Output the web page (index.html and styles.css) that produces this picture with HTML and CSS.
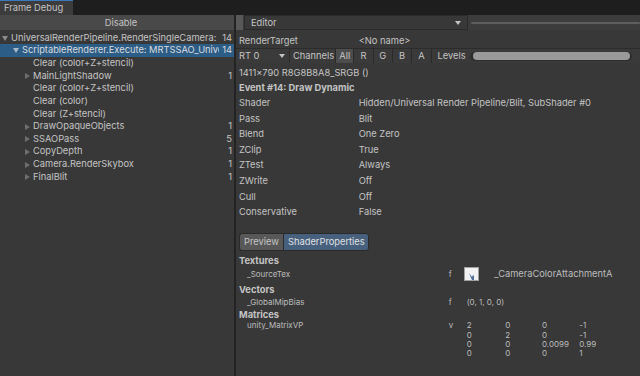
FILE: index.html
```html
<!DOCTYPE html>
<html>
<head>
<meta charset="utf-8">
<link rel="stylesheet" href="styles.css">
</head>
<body>
<div class="tabbar"><div class="tab">Frame Debug</div></div>
<div class="main">
  <div class="left">
    <div class="btn-disable">Disable</div>
    <div class="tree">
      <div class="row d0"><span class="arr open"></span><span class="name">UniversalRenderPipeline.RenderSingleCamera:</span><span class="cnt">14</span></div>
      <div class="row d1 sel"><span class="arr open"></span><span class="name">ScriptableRenderer.Execute: MRTSSAO_Universal</span><span class="cnt">14</span></div>
      <div class="row d2"><span class="arr"></span><span class="name">Clear (color+Z+stencil)</span><span class="cnt"></span></div>
      <div class="row d2"><span class="arr closed"></span><span class="name">MainLightShadow</span><span class="cnt">1</span></div>
      <div class="row d2"><span class="arr"></span><span class="name">Clear (color+Z+stencil)</span><span class="cnt"></span></div>
      <div class="row d2"><span class="arr"></span><span class="name">Clear (color)</span><span class="cnt"></span></div>
      <div class="row d2"><span class="arr"></span><span class="name">Clear (Z+stencil)</span><span class="cnt"></span></div>
      <div class="row d2"><span class="arr closed"></span><span class="name">DrawOpaqueObjects</span><span class="cnt">1</span></div>
      <div class="row d2"><span class="arr closed"></span><span class="name">SSAOPass</span><span class="cnt">5</span></div>
      <div class="row d2"><span class="arr closed"></span><span class="name">CopyDepth</span><span class="cnt">1</span></div>
      <div class="row d2"><span class="arr closed"></span><span class="name">Camera.RenderSkybox</span><span class="cnt">1</span></div>
      <div class="row d2"><span class="arr closed"></span><span class="name">FinalBlit</span><span class="cnt">1</span></div>
    </div>
  </div>
  <div class="rpanel">
    <div class="rtool">
      <div class="sq"></div>
      <div class="popup">Editor<span class="drop"></span></div>
      <div class="evslider"><div class="track"></div></div>
    </div>
    <div class="pane">
      <div class="prop first"><span class="lbl">RenderTarget</span><span class="val">&lt;No name&gt;</span></div>
      <div class="rtrow">
        <div class="rtpop">RT 0<span class="drop"></span></div>
        <div class="chlbl">Channels</div>
        <div class="chbtn on">All</div>
        <div class="chbtn">R</div>
        <div class="chbtn">G</div>
        <div class="chbtn">B</div>
        <div class="chbtn">A</div>
        <div class="levels">Levels</div>
        <div class="lvslider"><div class="lvfill"></div></div>
      </div>
      <div class="line res">1411x790 R8G8B8A8_SRGB ()</div>
      <div class="line title">Event #14: Draw Dynamic</div>
      <div class="props">
        <div class="prop"><span class="lbl">Shader</span><span class="val">Hidden/Universal Render Pipeline/Blit, SubShader #0</span></div>
        <div class="prop"><span class="lbl">Pass</span><span class="val">Blit</span></div>
        <div class="prop"><span class="lbl">Blend</span><span class="val">One Zero</span></div>
        <div class="prop"><span class="lbl">ZClip</span><span class="val">True</span></div>
        <div class="prop"><span class="lbl">ZTest</span><span class="val">Always</span></div>
        <div class="prop"><span class="lbl">ZWrite</span><span class="val">Off</span></div>
        <div class="prop"><span class="lbl">Cull</span><span class="val">Off</span></div>
        <div class="prop"><span class="lbl">Conservative</span><span class="val">False</span></div>
      </div>
      <div class="tabs"><div class="ptab">Preview</div><div class="ptab act">ShaderProperties</div></div>
      <div class="sect">Textures</div>
      <div class="sp tex">
        <span class="spn">_SourceTex</span><span class="spt">f</span>
        <span class="thumb"><svg width="15" height="14" viewBox="0 0 15 14"><rect x="0.5" y="0.5" width="14" height="13" fill="#f2f2f2" stroke="#a0a0a0"/><path d="M5 6 L7 11 L8 13 L10 13 L10 9 L9 8 L8 10 Z" fill="#4f6f9c"/></svg></span>
        <span class="spv">_CameraColorAttachmentA</span>
      </div>
      <div class="sect">Vectors</div>
      <div class="sp"><span class="spn">_GlobalMipBias</span><span class="spt">f</span><span class="spv vec">(0, 1, 0, 0)</span></div>
      <div class="sect">Matrices</div>
      <div class="sp mat">
        <span class="spn">unity_MatrixVP</span><span class="spt">v</span>
        <div class="mgrid">
          <span>2</span><span>0</span><span>0</span><span>-1</span>
          <span>0</span><span>2</span><span>0</span><span>-1</span>
          <span>0</span><span>0</span><span>0.0099</span><span>0.99</span>
          <span>0</span><span>0</span><span>0</span><span>1</span>
        </div>
      </div>
    </div>
  </div>
</div>
</body>
</html>
```

FILE: styles.css
```css
* { box-sizing: border-box; margin: 0; padding: 0; }
html, body { width: 640px; height: 376px; overflow: hidden; }
body {
  background: #383838;
  color: #c4c4c4;
  font-family: Inter, "Noto Sans", sans-serif;
  font-size: 9.3px;
}
.tabbar { height: 15px; background: #1e1e1e; display: flex; }
.tab {
  width: 73px; height: 15px; background: #3c3c3c;
  border-top: 1px solid #3a79bb;
  padding-left: 4px; line-height: 13px; color: #c4c4c4;
}
.main { display: flex; height: 361px; }
.left { width: 236px; border-right: 2px solid #232323; display: flex; flex-direction: column; }
.btn-disable {
  height: 15px; background: #494949; text-align: center; line-height: 15px; color: #c4c4c4;
  padding-left: 8px;
}
.tree { padding-top: 1.7px; }
.row { display: flex; height: 12.65px; line-height: 12.65px; padding-right: 2px; white-space: nowrap; }
.row.sel { background: #2c5d87; color: #dcdcdc; }
.row.d1 { padding-left: 11px; }
.row.d2 { padding-left: 22px; }
.arr { width: 11px; flex: none; position: relative; }
.arr.open::before {
  content: ""; position: absolute; left: 2px; top: 4px;
  border-left: 3px solid transparent; border-right: 3px solid transparent; border-top: 5px solid #8c8c8c;
}
.row.sel .arr.open::before { border-top-color: #a8b8c8; }
.arr.closed::before {
  content: ""; position: absolute; left: 3px; top: 3.5px;
  border-top: 3px solid transparent; border-bottom: 3px solid transparent; border-left: 5px solid #6e6e6e;
}
.name { flex: 1; overflow: hidden; }
.cnt { flex: none; padding-left: 3px; text-align: right; }

.rpanel { flex: 1; display: flex; flex-direction: column; }
.rtool { height: 15px; display: flex; background: #3c3c3c; }
.sq { width: 7px; background: #585858; margin-right: 1px; }
.popup {
  width: 224px; background: #383838; border: 1px solid #2a2a2a; padding-left: 6px;
  line-height: 13px; position: relative;
}
.drop {
  position: absolute; right: 6px; top: 5px;
  border-left: 3px solid transparent; border-right: 3px solid transparent; border-top: 4px solid #c4c4c4;
}
.evslider { flex: 1; position: relative; }
.track { position: absolute; left: 3px; right: 0; top: 7px; height: 1.5px; background: #5e5e5e; border-radius: 1px; }

.pane { padding: 3.5px 0 0 3px; }
.prop { display: flex; height: 15.6px; line-height: 15.6px; white-space: nowrap; }
.prop.first { height: 14px; line-height: 14px; }
.lbl { width: 119.7px; flex: none; }
.rtrow { display: flex; height: 15px; line-height: 14px; margin-left: -3px; background: #3a3a3a; border-top: 1px solid #2c2c2c; }
.rtpop { width: 54px; padding-left: 3px; position: relative; border-right: 1px solid #2a2a2a; }
.rtpop .drop { right: 4px; top: 5px; }
.chlbl { padding: 0 1px 0 3px; }
.chbtn { width: 19.3px; text-align: center; border-right: 1px solid #2a2a2a; }
.chbtn.on { background: #4d4d4d; border-left: 1px solid #2a2a2a; }
.levels { padding-left: 6px; width: 38.5px; }
.lvslider { width: 162px; height: 9px; margin-top: 3px; background: #2e2e2e; border-radius: 5px; position: relative; }
.lvfill { position: absolute; left: 2.5px; right: 2.5px; top: 0.5px; bottom: 0.5px; background: #9a9a9a; border-radius: 4px; }

.line { height: 14.5px; line-height: 14.5px; }
.res { margin-top: 3.5px; }
.title { font-weight: 700; }

.tabs { display: flex; margin-top: 13px; height: 18px; line-height: 16px; }
.ptab { border: 1px solid #2a2a2a; padding: 0 4px; }
.ptab:first-child { background: #585858; border-radius: 3px 0 0 3px; border-right: none; width: 44px; }
.ptab.act { background: #46607e; color: #e0e0e0; border-radius: 0 3px 3px 0; width: 85.6px; }

.sect { font-weight: 700; height: 12px; line-height: 12px; }
.tabs + .sect { margin-top: 4px; }
.sp { display: flex; font-size: 8px; padding-left: 8px; height: 13px; line-height: 13px; color: #bdbdbd; white-space: nowrap; }
.sp.tex { height: 17px; line-height: 14px; }
.spn { width: 201.7px; flex: none; }
.spt { width: 18px; flex: none; }
.thumb { width: 30px; flex: none; margin-left: -2.4px; }
.thumb svg { display: block; }
.spv { font-size: 9.3px; }
.spv.vec { font-size: 8px; }
.sp.mat { height: auto; line-height: 9.3px; padding-top: 0.7px; }
.mgrid { display: grid; grid-template-columns: 38.6px 36.7px 37.3px 30px; }
```
